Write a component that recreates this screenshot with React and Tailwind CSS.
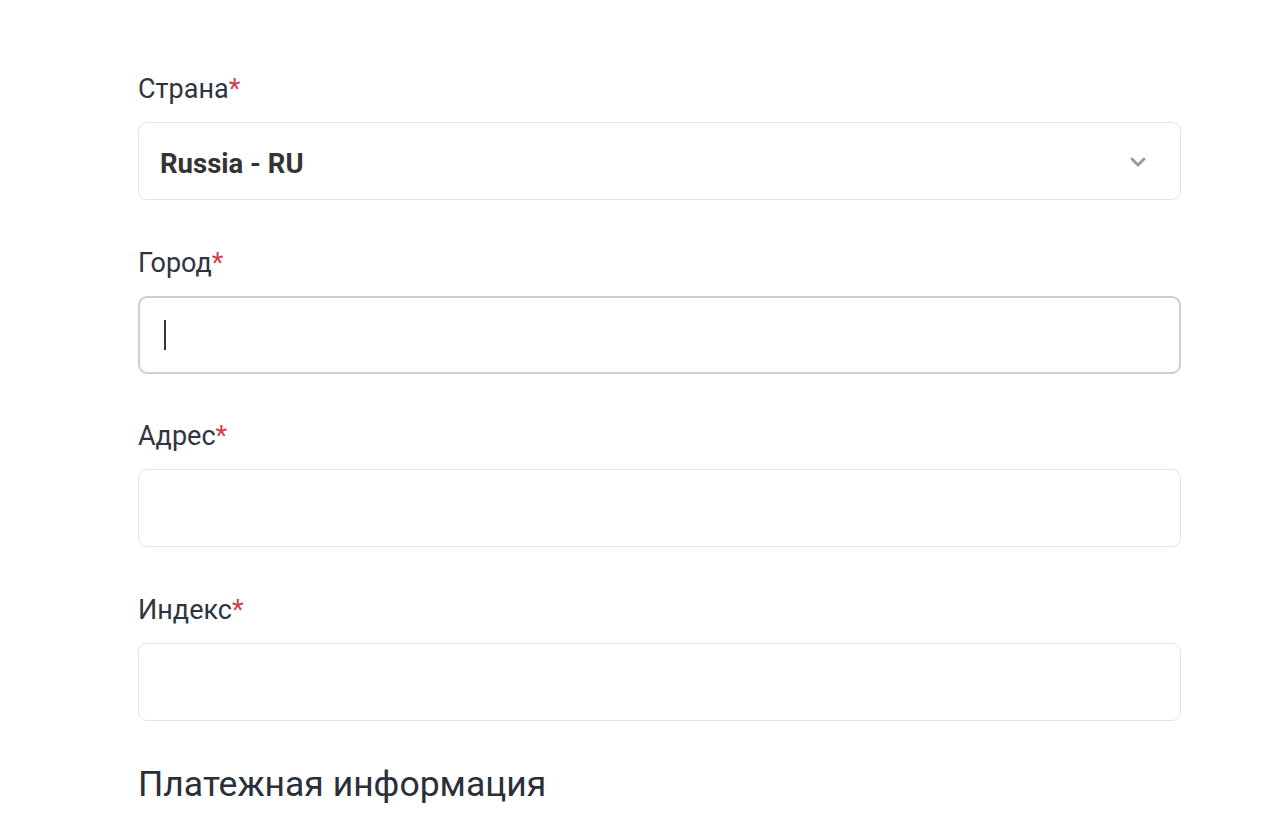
import React from "react";

function Label({ children }) {
  return (
    <div className="text-[27px] leading-[32px] text-[#2f3540]">
      {children}
      <span className="text-[#d43b4b]">*</span>
    </div>
  );
}

function Field({ label, focused, children }) {
  return (
    <div className="flex flex-col gap-[17px]">
      <Label>{label}</Label>
      <div
        className={`h-[78px] rounded-[9px] bg-white flex items-center px-[21px] ${
          focused ? "border-2 border-[#cdcfd2]" : "border-[1.5px] border-[#e4e4e4]"
        }`}
      >
        {children}
      </div>
    </div>
  );
}

export default function App() {
  return (
    <div
      className="min-h-[825px] w-[1280px] bg-white pt-[73px] pl-[138px] overflow-hidden"
      style={{ fontFamily: "Roboto, 'Noto Sans', sans-serif" }}
    >
      <div className="w-[1043px] flex flex-col gap-[46.5px]">
        <Field label="Страна">
          <span className="flex-1 pt-[5px] text-[27.5px] font-bold text-[#333]">Russia - RU</span>
          <svg width="18" height="12" viewBox="0 0 18 12" className="mr-[12px] mt-[2px]">
            <path d="M3 3 L9 9 L15 3" fill="none" stroke="#9b9b9b" strokeWidth="3" strokeLinecap="round" strokeLinejoin="round" />
          </svg>
        </Field>
        <Field label="Город" focused>
          <span className="ml-[3px] w-[2px] h-[30px] bg-[#333]" />
        </Field>
        <Field label="Адрес" />
        <Field label="Индекс" />
      </div>
      <h2 className="mt-[43px] text-[35.5px] leading-[40px] text-[#2a303a]">Платежная информация</h2>
    </div>
  );
}
